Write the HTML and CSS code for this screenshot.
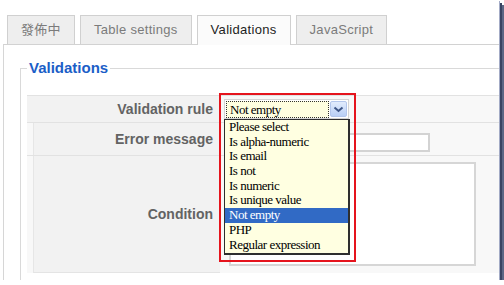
FILE: index.html
```html
<!DOCTYPE html>
<html lang="en">

<head>
  <meta charset="UTF-8" />
  <title>Validations</title>
  <link rel="stylesheet" href="styles.css">
</head>

<body>
  <div class="shot">
    <ul class="tabs">
      <li class="tab">發佈中</li>
      <li class="tab">Table settings</li>
      <li class="tab active">Validations</li>
      <li class="tab">JavaScript</li>
    </ul>

    <div class="panel">
      <fieldset class="group">
        <legend>Validations</legend>

        <div class="form-table">
          <div class="row row-rule">
            <div class="label">Validation rule</div>
            <div class="value">
              <div class="select">
                <span class="select-text">Not empty</span>
                <span class="select-btn">
                  <svg width="11" height="7" viewBox="0 0 11 7">
                    <path d="M1.5 1.5 L5.5 5 L9.5 1.5" fill="none" stroke="#3e5687" stroke-width="2" />
                  </svg>
                </span>

                <!-- open option list -->
                <ul class="dropdown">
                  <li>Please select</li>
                  <li>Is alpha-numeric</li>
                  <li>Is email</li>
                  <li>Is not</li>
                  <li>Is numeric</li>
                  <li>Is unique value</li>
                  <li class="selected">Not empty</li>
                  <li>PHP</li>
                  <li>Regular expression</li>
                </ul>
              </div>
            </div>
          </div>

          <div class="row row-sub row-msg">
            <div class="label">Error message</div>
            <div class="value">
              <div class="text-input"></div>
            </div>
          </div>

          <div class="row row-sub row-cond">
            <div class="label">Condition</div>
            <div class="value">
              <div class="text-area"></div>
            </div>
          </div>
        </div>
      </fieldset>
    </div>

    <!-- red annotation box -->
    <div class="highlight"></div>
  </div>
</body>

</html>
```

FILE: styles.css
```css
* {
  box-sizing: border-box;
}

body {
  margin: 0;
  background: #ffffff;
  font-family: "Liberation Sans", "Noto Sans CJK TC", sans-serif;
}

.shot {
  position: relative;
  width: 499px;
  height: 280px;
  overflow: hidden;
  background: #ffffff;
  box-shadow: 1px 1px 0 #a3abc6, 3px 3px 0 #3a4462, 5px 5px 0 #5c6684;
}

/* tabs */
.tabs {
  display: flex;
  gap: 5px;
  margin: 0;
  padding: 15px 0 0 7px;
  list-style: none;
}

.tab {
  height: 29px;
  line-height: 28px;
  padding: 0 13px;
  border: 1px solid #d0d0d0;
  border-bottom: none;
  background: #eeeeee;
  color: #7b7b7b;
  font-size: 13px;
  letter-spacing: 0.3px;
}

.tab.active {
  position: relative;
  z-index: 1;
  height: 30px;
  margin-bottom: -1px;
  background: #fbfbfb;
  color: #1e1e1e;
}

/* panel */
.panel {
  width: 540px;
  margin-left: 3px;
  padding: 14px 0 0 16px;
  border-top: 1px solid #d2d2d2;
  border-left: 1px solid #d6d6d6;
}

.group {
  margin: 0;
  padding: 18px 0 30px 6px;
  border: 1px solid #d9d9d9;
}

.group legend {
  padding: 0 2px;
  font-size: 15px;
  line-height: 18px;
  font-weight: bold;
  color: #1b5ec7;
}

.form-table {
  background: #f8f8f8;
}

.row {
  display: grid;
  grid-template-columns: 193px 1fr;
  border-top: 1px solid #e2e2e2;
}

.label {
  display: flex;
  align-items: center;
  justify-content: flex-end;
  padding-right: 7px;
  background: #f2f2f2;
  color: #636363;
  font-size: 14px;
  font-weight: bold;
}

.row-sub .label {
  margin-left: 6px;
  border-left: 1px solid #e6e6e6;
}

.row-rule {
  height: 27px;
}

.row-msg {
  height: 33px;
}

.row-cond .label {
  height: 117px;
  border-bottom: 1px solid #e4e4e4;
}

.row-rule .value {
  padding: 3px 0 0 4px;
}

.row-msg .value {
  padding: 10px 0 0 4px;
}

.row-cond .value {
  padding: 6px 0 0 9px;
}

/* select */
.select {
  position: relative;
  display: flex;
  align-items: center;
  width: 125px;
  height: 20px;
  padding: 1px;
  border: 1px solid #d4d4d4;
  background: #ffffff;
}

.select-text {
  flex: 1;
  height: 17px;
  padding-left: 3px;
  border: 1px dotted #333333;
  background: #ffffe0;
  font-family: "Liberation Serif", serif;
  font-size: 13px;
  letter-spacing: -0.5px;
  line-height: 15px;
  color: #000000;
}

.select-btn {
  display: flex;
  align-items: center;
  justify-content: center;
  width: 17px;
  height: 16px;
  margin-left: 1px;
  border: 1px solid #b3c6ec;
  border-radius: 2px;
  background: linear-gradient(#e2ecfd, #b9cff6);
}

.dropdown {
  position: absolute;
  top: 19px;
  left: -1px;
  width: 126px;
  margin: 0;
  padding: 0 0 1px;
  list-style: none;
  border: 1px solid #2e2e2e;
  border-right-width: 2px;
  border-bottom-width: 2px;
  background: #ffffe1;
  font-family: "Liberation Serif", serif;
  font-size: 13px;
  letter-spacing: -0.5px;
  color: #000000;
}

.dropdown li {
  height: 14.7px;
  line-height: 14.7px;
  padding-left: 4px;
}

.dropdown li.selected {
  background: #316ac5;
  color: #ffffff;
}

.text-input {
  width: 206px;
  height: 19px;
  border: 2px solid #d3d3d3;
  background: #ffffff;
}

.text-area {
  width: 247px;
  height: 104px;
  border: 2px solid #d6d6d6;
  background: #ffffff;
}

.highlight {
  position: absolute;
  top: 93px;
  left: 219px;
  width: 137px;
  height: 169px;
  border: 2px solid #e5141d;
  pointer-events: none;
}
```
